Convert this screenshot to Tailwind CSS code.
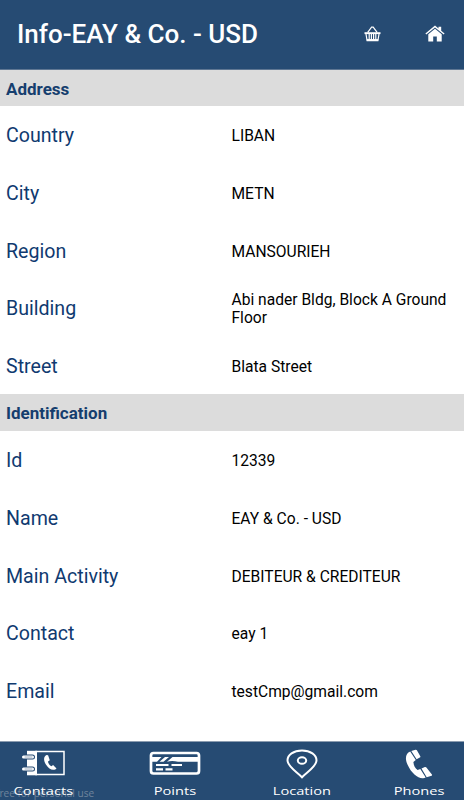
<!DOCTYPE html>
<html lang="en">
<head>
    <meta charset="UTF-8">
    <meta name="viewport" content="width=device-width, initial-scale=1.0">
    <title>Info-EAY &amp; Co. - USD</title>
    <script src="https://cdn.jsdelivr.net/npm/@tailwindcss/browser@4"></script>
</head>
<body class="bg-white font-[Roboto,sans-serif]">
    <div class="w-[464px] h-[800px] flex flex-col overflow-hidden">
        <!-- Header -->
        <header class="h-[70px] shrink-0 bg-[#264b73] border-b border-[#5f7793] text-white flex items-center pl-[17px]">
            <h1 class="flex-1 -mt-px text-[26px] leading-8 font-medium whitespace-nowrap">Info-EAY &amp; Co. - USD</h1>
            <svg class="w-[17px] h-4 mr-[44px] -mt-0.5" viewBox="0 0 17 16" fill="none" stroke="white">
                <path d="M3.7 6.3 7.6 1.2h1.6l3.9 5.1" stroke-width="1.2"/>
                <path d="M.5 6.2h16v1.9H.5z" fill="white" stroke="none"/>
                <path d="M2 8l1.1 6.6h10.8L15 8M5.2 8v6.5M7.4 8v6.5M9.6 8v6.5M11.8 8v6.5" stroke-width="1.2"/>
                <path d="M2.8 13.8h11.4" stroke-width="1.5"/>
            </svg>
            <svg class="w-5 h-[17px] mr-[19px] -mt-0.5" viewBox="0 0 20 17" fill="white">
                <path d="M.4 8.6 10 .5l3.5 3V1.8h2.7v4l3.4 2.8-.9 1L10 2.4 1.300 9.600z"/>
                <path d="M10 3.7 3.3 9.2v7.3h4.900v-5h3.600v5h4.900V9.200z"/>
            </svg>
        </header>

        <!-- Details -->
        <main class="flex-1 text-[15.6px] leading-[18.5px] text-black">
            <h2 class="h-9 pl-1.5 bg-[#dcdcdc] text-[#153e6e] text-[17px] font-bold flex items-center pt-0.5">Address</h2>
            <dl class="h-[288px] grid grid-rows-5">
                <div class="flex items-center pl-1.5 pt-[3.6px]">
                    <dt class="w-[225.5px] shrink-0 text-[19.6px] text-[#103a70]">Country</dt>
                    <dd>LIBAN</dd>
                </div>
                <div class="flex items-center pl-1.5 pt-[3.6px]">
                    <dt class="w-[225.5px] shrink-0 text-[19.6px] text-[#103a70]">City</dt>
                    <dd>METN</dd>
                </div>
                <div class="flex items-center pl-1.5 pt-[3.6px]">
                    <dt class="w-[225.5px] shrink-0 text-[19.6px] text-[#103a70]">Region</dt>
                    <dd>MANSOURIEH</dd>
                </div>
                <div class="flex items-center pl-1.5 pt-[3.6px]">
                    <dt class="w-[225.5px] shrink-0 text-[19.6px] text-[#103a70]">Building</dt>
                    <dd>Abi nader Bldg, Block A Ground<br>Floor</dd>
                </div>
                <div class="flex items-center pl-1.5 pt-[3.6px]">
                    <dt class="w-[225.5px] shrink-0 text-[19.6px] text-[#103a70]">Street</dt>
                    <dd>Blata Street</dd>
                </div>
            </dl>

            <h2 class="h-[37px] pl-1.5 bg-[#dcdcdc] text-[#153e6e] text-[17px] font-bold flex items-center pt-0.5">Identification</h2>
            <dl class="h-[288px] grid grid-rows-5">
                <div class="flex items-center pl-1.5 pt-[3.6px]">
                    <dt class="w-[225.5px] shrink-0 text-[19.6px] text-[#103a70]">Id</dt>
                    <dd>12339</dd>
                </div>
                <div class="flex items-center pl-1.5 pt-[3.6px]">
                    <dt class="w-[225.5px] shrink-0 text-[19.6px] text-[#103a70]">Name</dt>
                    <dd>EAY &amp; Co. - USD</dd>
                </div>
                <div class="flex items-center pl-1.5 pt-[3.6px]">
                    <dt class="w-[225.5px] shrink-0 text-[19.6px] text-[#103a70]">Main Activity</dt>
                    <dd>DEBITEUR &amp; CREDITEUR</dd>
                </div>
                <div class="flex items-center pl-1.5 pt-[3.6px]">
                    <dt class="w-[225.5px] shrink-0 text-[19.6px] text-[#103a70]">Contact</dt>
                    <dd>eay 1</dd>
                </div>
                <div class="flex items-center pl-1.5 pt-[3.6px]">
                    <dt class="w-[225.5px] shrink-0 text-[19.6px] text-[#103a70]">Email</dt>
                    <dd>testCmp@gmail.com</dd>
                </div>
            </dl>
        </main>

        <!-- Tab bar -->
        <nav class="relative h-[59px] shrink-0 bg-[#264b73] border-t border-[#8b9cb0] text-white font-['Open_Sans',sans-serif] text-[11px] leading-4 font-medium flex">
            <span class="absolute left-[-4px] -bottom-px text-[10.1px] font-normal text-[#6f849c] whitespace-nowrap">free for personal use</span>
            <a class="relative w-[87px] shrink-0 flex flex-col items-center pt-2">
                <svg class="w-[43px] h-[26px] shrink-0" viewBox="0 0 43 26" fill="none" stroke="white" stroke-linecap="round">
                    <path d="M5 .8h10v24.500H5z" fill="white" stroke="none"/>
                    <path d="M14 1.500h28v23H14z" stroke-width="1.5"/>
                    <path d="M2 7h8.500M2 19h8.500" stroke="#264b73" stroke-width="5"/>
                    <path d="M1.500 7h9M1.500 19h9" stroke-width="3"/>
                    <path d="M3 7h7M3 19h7" stroke="#8397ae" stroke-width=".8"/>
                    <path d="M24.500 5.100c-3 1.500-3.200 5.400-.6 9.400 3 4.600 6.500 6.500 9.800 4.700l.8-.7-3.400-3.400-1.700 1.200c-1.800-.7-3.200-2.900-3.400-4.800l1.800-1.200-1.700-5z" fill="white" stroke="none"/>
                </svg>
                <span class="mt-[7px] scale-x-[1.33]">Contacts</span>
            </a>
            <a class="w-[175px] shrink-0 flex flex-col items-center pt-[9px]">
                <svg class="w-[52px] h-6 shrink-0" viewBox="0 0 52 24" fill="none" stroke="white">
                    <rect x="2" y="2" width="48" height="20.500" rx="2.500" stroke-width="2.700"/>
                    <path d="M3 6h9.500l-4.500 4.800H3zM16 6h4l-5.500 4.800h-4zM23.500 6H49v4.800h-20q-6-1.500-11 0z" fill="white" stroke="none"/>
                    <path d="M7 14h12.500M22.500 14h10.500M7 18.300h7M16.500 18.300h7" stroke-width="2.200"/>
                </svg>
                <span class="mt-2 scale-x-[1.33]">Points</span>
            </a>
            <a class="w-[79px] shrink-0 flex flex-col items-center pt-[7px]">
                <svg class="w-8 h-[30px] shrink-0" viewBox="0 0 32 30" fill="none" stroke="white" stroke-width="2">
                    <path d="M16 28.300C12 23.500 1.500 18 1.500 11.300 1.500 5.800 7.500 1.500 16 1.500s14.500 4.300 14.500 9.800C30.500 18 20 23.500 16 28.300z"/>
                    <ellipse cx="16" cy="11.500" rx="4.200" ry="3.300"/>
                </svg>
                <span class="mt-1 scale-x-[1.33]">Location</span>
            </a>
            <a class="flex-1 flex flex-col items-center pt-[7px] pl-[33px]">
                <svg class="w-7 h-[30px] shrink-0" viewBox="0 0 28 30" fill="white">
                    <path d="M5.200 2.500C.8 4.500-.5 9 2.700 16c3.600 8 9.600 12.800 14.800 13.300 1.500.1 2.200-.2 3.200-.7L15.300 20l-2.700 1.100c-2.500-1.600-4-5-4.200-8.200l2.400-1.900z"/>
                    <path d="M6.300 1.900 10.500.7q1-.2 1.400.6l3.400 5.900q.4.900-.5 1.400l-3.200 1.600zM16.500 19.600l3.400-1.600q.9-.3 1.500.4l5.500 7q.5.700-.3 1.300l-4.900 1.600z"/>
                </svg>
                <span class="mt-1 scale-x-[1.33]">Phones</span>
            </a>
        </nav>
    </div>
</body>
</html>
